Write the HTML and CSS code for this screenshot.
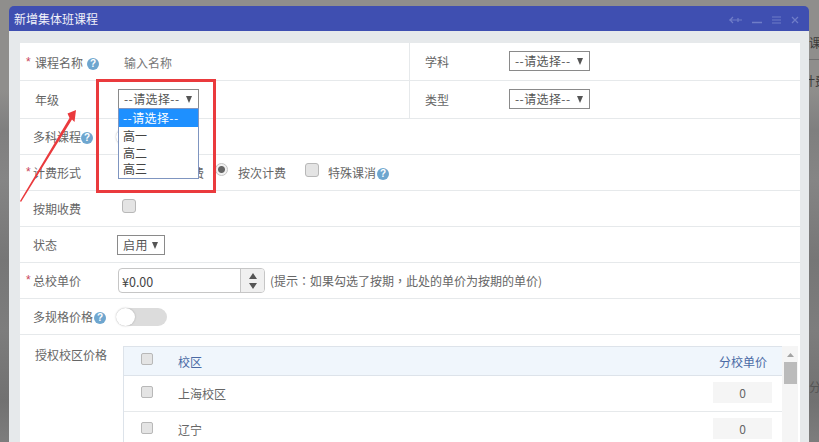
FILE: index.html
```html
<!DOCTYPE html>
<html lang="zh-CN">
<head>
    <meta charset="UTF-8">
    <meta name="viewport" content="width=device-width, initial-scale=1.0">
    <title>新增集体班课程</title>
    <link rel="stylesheet" href="styles.css">
</head>
<body>
    <!-- Page behind the dialog -->
    <div class="behind behind-a">课</div>
    <div class="behind behind-line"></div>
    <div class="behind behind-b">计费</div>
    <div class="behind behind-c">分</div>

    <div class="modal">
        <!-- Title bar -->
        <div class="modal-title">
            <span>新增集体班课程</span>
            <div class="window-tools">
                <svg width="15" height="8" viewBox="0 0 15 8"><path d="M1 4h13M5 1 2 4l3 3M10 2v4" fill="none" stroke="#6f7dc8" stroke-width="1.2"/></svg>
                <svg width="10" height="8" viewBox="0 0 10 8"><path d="M0 6.5h10" fill="none" stroke="#6f7dc8" stroke-width="1.5"/></svg>
                <svg width="11" height="8" viewBox="0 0 11 8"><path d="M1 1h9M1 4h9M1 7h9" fill="none" stroke="#6f7dc8" stroke-width="1.1"/></svg>
                <svg width="8" height="8" viewBox="0 0 8 8"><path d="M1 1l6 6M7 1 1 7" fill="none" stroke="#6f7dc8" stroke-width="1.2"/></svg>
            </div>
        </div>

        <div class="modal-body">
            <div class="form">
                <!-- Name / subject -->
                <div class="row row-name">
                    <div class="cell-left">
                        <label class="label label-wide label-low req">课程名称<i class="help help-gap">?</i></label>
                        <span class="placeholder">输入名称</span>
                    </div>
                    <div class="cell-right">
                        <label class="side-label">学科</label>
                        <div class="select select-wide">--请选择--</div>
                    </div>
                </div>

                <!-- Grade / type -->
                <div class="row row-grade">
                    <div class="cell-left">
                        <label class="label label-wide">年级</label>
                        <div class="select select-wide">--请选择--</div>
                    </div>
                    <div class="cell-right">
                        <label class="side-label">类型</label>
                        <div class="select select-wide">--请选择--</div>
                    </div>
                </div>

                <div class="row row-short">
                    <label class="label">多科课程<i class="help">?</i></label>
                    <div class="toggle"><span class="knob"></span></div>
                </div>

                <!-- Billing type -->
                <div class="row row-short">
                    <label class="label req">计费形式</label>
                    <div class="options">
                        <span class="radio"></span>
                        <span class="option-text">按课时计费</span>
                        <span class="radio radio-on"></span>
                        <span class="option-text">按次计费</span>
                        <span class="checkbox checkbox-gap"></span>
                        <span class="option-text">特殊课消<i class="help help-tight">?</i></span>
                    </div>
                </div>

                <div class="row row-short">
                    <label class="label">按期收费</label>
                    <span class="checkbox checkbox-raised"></span>
                </div>

                <div class="row row-short">
                    <label class="label">状态</label>
                    <div class="select select-status">启用</div>
                </div>

                <!-- Price -->
                <div class="row row-short">
                    <label class="label req">总校单价</label>
                    <div class="spinner">
                        <span class="spinner-value">¥0.00</span>
                        <span class="spinner-btns">
                            <svg width="8" height="22" viewBox="0 0 8 22"><path d="M4 3 8 9H0zM4 19 0 13h8z" fill="#555"/></svg>
                        </span>
                    </div>
                    <span class="hint" lang="zh-Hant">(提示：如果勾选了按期，此处的单价为按期的单价)</span>
                </div>

                <div class="row row-short">
                    <label class="label">多规格价格<i class="help help-tight">?</i></label>
                    <div class="toggle"><span class="knob"></span></div>
                </div>

                <!-- Campus prices -->
                <div class="row-campus">
                    <label class="label label-wide label-top">授权校区价格</label>
                    <div class="campus-wrap">
                        <div class="campus-table">
                            <div class="campus-head">
                                <span class="checkbox checkbox-small"></span>
                                <span class="campus-name">校区</span>
                                <span class="campus-price">分校单价</span>
                            </div>
                            <div class="campus-row">
                                <span class="checkbox checkbox-small"></span>
                                <span class="campus-name">上海校区</span>
                                <span class="price-box">0</span>
                            </div>
                            <div class="campus-row">
                                <span class="checkbox checkbox-small"></span>
                                <span class="campus-name">辽宁</span>
                                <span class="price-box">0</span>
                            </div>
                        </div>
                        <div class="scrollbar">
                            <svg width="7" height="4" viewBox="0 0 7 4"><path d="M3.5 0 7 4H0z" fill="#a3a3a3"/></svg>
                            <div class="scroll-thumb"></div>
                        </div>
                    </div>
                </div>
            </div>
        </div>
    </div>

    <!-- Open dropdown list -->
    <div class="dropdown">
        <div class="dropdown-item active">--请选择--</div>
        <div class="dropdown-item">高一</div>
        <div class="dropdown-item">高二</div>
        <div class="dropdown-item">高三</div>
    </div>

    <!-- Red annotation -->
    <div class="mark-box"></div>
    <svg class="mark-arrow" width="60" height="95" viewBox="0 0 60 95">
        <path d="M1 92 50.5 9 48.5 4.5 57 1 55.5 13 53 10.5 2 93z" fill="#ea3a3d"/>
    </svg>
</body>
</html>
```

FILE: styles.css
```css
/* Global Styles */
html, body {
    height: 442px;
    overflow: hidden;
}

body {
    margin: 0;
    padding: 6px 10px 0 9px;
    box-sizing: border-box;
    position: relative;
    font-family: "Noto Sans CJK SC", "Liberation Sans", sans-serif;
    font-size: 12px;
    color: #666;
    background: linear-gradient(180deg, #8f8e8c 0, #8f8e8c 90px, #7f7f7f 130px, #858585 180px, #767676 260px, #7d7d7d 330px, #717171 400px, #7d7d7d 442px);
}

.behind {
    position: absolute;
    left: 809px;
    color: #3a3a3a;
    font-size: 12px;
    white-space: nowrap;
}

.behind-a { top: 34px; }
.behind-line { top: 59px; width: 10px; height: 1px; background: #6f6f6f; }
.behind-b { top: 72px; left: 803px; z-index: -1; }
.behind-c { top: 378px; color: #555; }

/* Dialog */
.modal {
    width: 800px;
    border-radius: 5px 5px 0 0;
    overflow: hidden;
    position: relative;
}

.modal-title {
    height: 25px;
    padding: 0 10px 0 5px;
    display: flex;
    align-items: center;
    justify-content: space-between;
    background: #3f4fb1;
    color: #f1f2fa;
    font-size: 12px;
}

.window-tools {
    display: flex;
    align-items: center;
    gap: 9px;
    margin-top: 2px;
}

.modal-body {
    padding: 12px 9px 0 11px;
    background: #e6e9eb;
    height: 420px;
}

.form {
    background: #fff;
    height: 100%;
}

/* Rows */
.row {
    display: flex;
    align-items: center;
    border-bottom: 1px solid #e6e9eb;
    box-sizing: border-box;
}

.row-name,
.row-grade {
    height: 38px;
    align-items: stretch;
}

.row-short {
    height: 36px;
}

.cell-left {
    width: 390px;
    display: flex;
    align-items: center;
    border-right: 1px solid #e6e9eb;
    box-sizing: border-box;
}

.cell-right {
    display: flex;
    align-items: center;
    padding-left: 15px;
}

.label {
    width: 98px;
    flex: none;
    padding-left: 13px;
    box-sizing: border-box;
    position: relative;
    white-space: nowrap;
}

.label-wide {
    padding-left: 15px;
}

.label-low {
    margin-top: 2px;
}

.req::before {
    content: "*";
    position: absolute;
    left: 6px;
    top: 1px;
    font-family: "Liberation Sans", sans-serif;
    color: #c9455a;
}

.side-label {
    width: 84px;
    flex: none;
}

.placeholder {
    margin: 2px 0 0 6px;
    color: #777;
}

.help {
    display: inline-block;
    width: 12px;
    height: 12px;
    border-radius: 50%;
    background: #6ea6cf;
    color: #fff;
    font: bold 10px/12px "Liberation Sans", sans-serif;
    text-align: center;
    vertical-align: 1px;
}

.help-gap {
    margin-left: 4px;
}

.help-tight {
    margin-left: 1px;
}

/* Form controls */
.select {
    height: 20px;
    box-sizing: border-box;
    border: 1px solid #8a8a8a;
    background: #fff;
    color: #555;
    line-height: 18px;
    padding-left: 4px;
    position: relative;
    letter-spacing: 0.4px;
}

.select::after {
    content: "";
    position: absolute;
    right: 6px;
    top: 6px;
    border-left: 3.5px solid transparent;
    border-right: 3.5px solid transparent;
    border-top: 7px solid #555;
}

.select-wide {
    width: 81px;
    margin-top: -1px;
    padding-left: 5px;
}

.select-status {
    width: 48px;
    margin-left: -1px;
    padding-left: 5px;
}

.options {
    display: flex;
    align-items: center;
}

.radio {
    width: 13px;
    height: 13px;
    box-sizing: border-box;
    border: 1px solid #c4c4c4;
    border-radius: 50%;
    background: #f1f1f1;
    margin: -6px 9px 0 4px;
    flex: none;
}

.radio-on {
    background: radial-gradient(circle, #666 0, #666 3px, #f1f1f1 4px);
    margin-left: 11px;
    margin-right: 10px;
}

.option-text {
    white-space: nowrap;
}

.checkbox {
    display: block;
    width: 14px;
    height: 14px;
    box-sizing: border-box;
    border: 1px solid #b8b8b8;
    border-radius: 3px;
    background: #e4e4e4;
    flex: none;
}

.checkbox-small {
    width: 12px;
    height: 12px;
    margin-top: -4px;
    border-radius: 2px;
}

.checkbox-gap {
    margin: -6px 9px 0 19px;
}

.checkbox-raised {
    margin: -6px 0 0 4px;
}

.spinner {
    display: flex;
    width: 147px;
    height: 25px;
    box-sizing: border-box;
    border: 1px solid #c6c6c6;
    border-radius: 4px;
    overflow: hidden;
}

.spinner-value {
    flex: 1;
    padding-left: 3px;
    line-height: 25px;
    color: #444;
    font-size: 12.5px;
}

.spinner-btns {
    width: 23px;
    display: flex;
    align-items: center;
    justify-content: center;
    background: #f0f0f0;
    border-left: 1px solid #c6c6c6;
}

.hint {
    margin-left: 5px;
    white-space: nowrap;
    font-family: "Noto Sans CJK TC", "Liberation Sans", sans-serif;
}

.toggle {
    width: 51px;
    height: 18px;
    margin-left: -2px;
    border-radius: 9px;
    background: #dcdcdc;
}

.knob {
    display: block;
    width: 19px;
    height: 18px;
    border-radius: 50%;
    background: #fff;
    box-shadow: 0 0 2px rgba(0, 0, 0, 0.25);
}

/* Campus table */
.row-campus {
    display: flex;
    align-items: flex-start;
    padding-top: 11px;
}

.label-top {
    width: 103px;
}

.campus-wrap {
    display: flex;
    width: 675px;
}

.campus-table {
    width: 659px;
    flex: none;
    border-left: 1px solid #dde3ea;
    box-sizing: border-box;
}

.campus-head,
.campus-row {
    display: flex;
    align-items: center;
    padding: 0 10px 0 17px;
    box-sizing: border-box;
}

.campus-head {
    height: 30px;
    background: #f0f6fc;
    border-top: 1px solid #dde3ea;
    border-bottom: 1px solid #dde3ea;
    color: #4a6aa5;
}

.campus-row {
    height: 36px;
    border-bottom: 1px solid #e6e9eb;
}

.campus-name {
    flex: 1;
    margin-left: 25px;
}

.campus-price {
    padding-right: 5px;
}

.price-box {
    width: 59px;
    height: 21px;
    margin-top: -2px;
    line-height: 21px;
    text-align: center;
    background: #f5f5f5;
}

.scrollbar {
    width: 16px;
    height: 96px;
    background: #f5f5f5;
    padding: 0 3px;
    box-sizing: border-box;
    display: flex;
    flex-direction: column;
    align-items: center;
}

.scrollbar svg {
    margin-top: 7px;
}

.scroll-thumb {
    width: 13px;
    height: 22px;
    margin-top: 5px;
    background: #bbb;
    flex: none;
}

/* Open dropdown */
.dropdown {
    position: absolute;
    left: 118px;
    top: 108px;
    width: 81px;
    height: 71px;
    box-sizing: border-box;
    border: 1px solid #7f95c0;
    background: #fff;
    color: #444;
}

.dropdown-item {
    height: 16.5px;
    line-height: 18px;
    padding-left: 4px;
}

.dropdown-item.active {
    height: 18px;
    line-height: 18px;
    background: #1e90ff;
    color: #fff;
    letter-spacing: 0.4px;
}

/* Red annotation */
.mark-box {
    position: absolute;
    left: 96px;
    top: 79px;
    width: 120px;
    height: 114px;
    box-sizing: border-box;
    border: 3px solid #ea3a3d;
}

.mark-arrow {
    position: absolute;
    left: 19px;
    top: 109px;
}
```
